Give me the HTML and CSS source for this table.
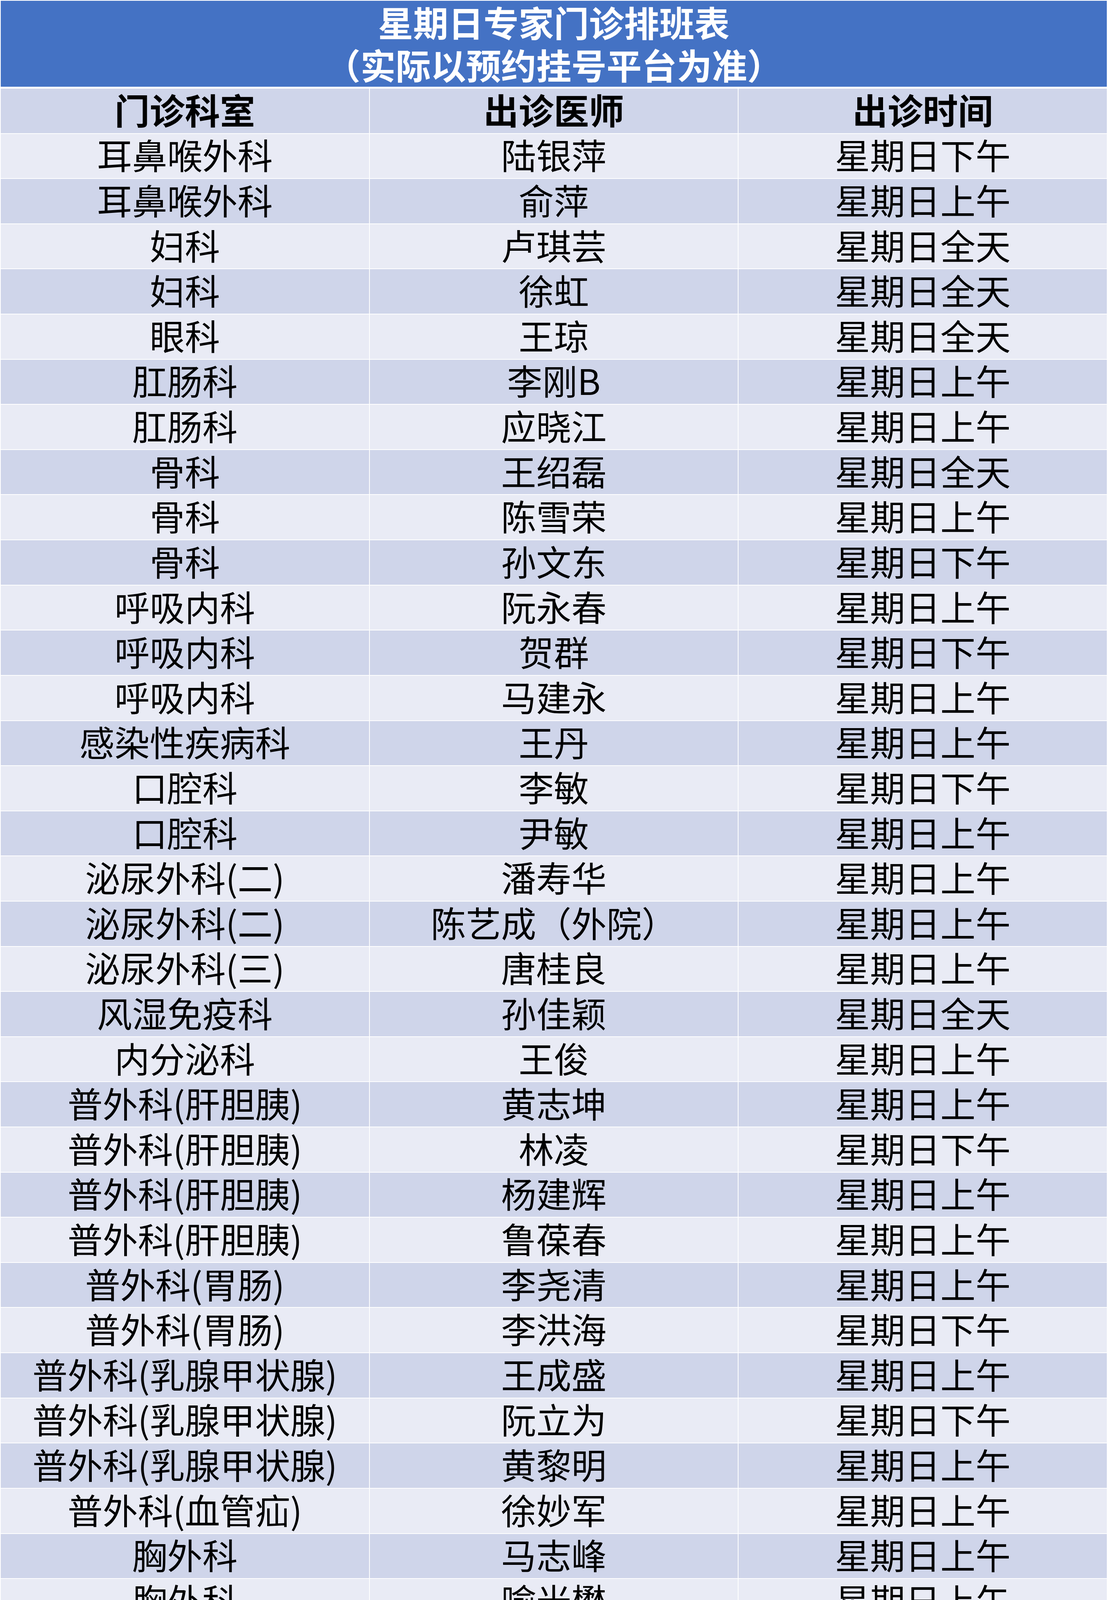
FILE: index.html
```html
<!DOCTYPE html>
<html lang="zh-CN">
<head>
<meta charset="utf-8">
<title>星期日专家门诊排班表</title>
<link rel="stylesheet" href="styles.css">
</head>
<body>
<div class="sheet">
  <div class="title">
    <div class="title-line">星期日专家门诊排班表</div>
    <div class="title-line">（实际以预约挂号平台为准）</div>
  </div>
  <div class="table">
    <div class="row head"><div>门诊科室</div><div>出诊医师</div><div>出诊时间</div></div>
    <div class="row light"><div>耳鼻喉外科</div><div>陆银萍</div><div>星期日下午</div></div>
    <div class="row dark"><div>耳鼻喉外科</div><div>俞萍</div><div>星期日上午</div></div>
    <div class="row light"><div>妇科</div><div>卢琪芸</div><div>星期日全天</div></div>
    <div class="row dark"><div>妇科</div><div>徐虹</div><div>星期日全天</div></div>
    <div class="row light"><div>眼科</div><div>王琼</div><div>星期日全天</div></div>
    <div class="row dark"><div>肛肠科</div><div>李刚B</div><div>星期日上午</div></div>
    <div class="row light"><div>肛肠科</div><div>应晓江</div><div>星期日上午</div></div>
    <div class="row dark"><div>骨科</div><div>王绍磊</div><div>星期日全天</div></div>
    <div class="row light"><div>骨科</div><div>陈雪荣</div><div>星期日上午</div></div>
    <div class="row dark"><div>骨科</div><div>孙文东</div><div>星期日下午</div></div>
    <div class="row light"><div>呼吸内科</div><div>阮永春</div><div>星期日上午</div></div>
    <div class="row dark"><div>呼吸内科</div><div>贺群</div><div>星期日下午</div></div>
    <div class="row light"><div>呼吸内科</div><div>马建永</div><div>星期日上午</div></div>
    <div class="row dark"><div>感染性疾病科</div><div>王丹</div><div>星期日上午</div></div>
    <div class="row light"><div>口腔科</div><div>李敏</div><div>星期日下午</div></div>
    <div class="row dark"><div>口腔科</div><div>尹敏</div><div>星期日上午</div></div>
    <div class="row light"><div>泌尿外科(二)</div><div>潘寿华</div><div>星期日上午</div></div>
    <div class="row dark"><div>泌尿外科(二)</div><div>陈艺成（外院）</div><div>星期日上午</div></div>
    <div class="row light"><div>泌尿外科(三)</div><div>唐桂良</div><div>星期日上午</div></div>
    <div class="row dark"><div>风湿免疫科</div><div>孙佳颖</div><div>星期日全天</div></div>
    <div class="row light"><div>内分泌科</div><div>王俊</div><div>星期日上午</div></div>
    <div class="row dark"><div>普外科(肝胆胰)</div><div>黄志坤</div><div>星期日上午</div></div>
    <div class="row light"><div>普外科(肝胆胰)</div><div>林凌</div><div>星期日下午</div></div>
    <div class="row dark"><div>普外科(肝胆胰)</div><div>杨建辉</div><div>星期日上午</div></div>
    <div class="row light"><div>普外科(肝胆胰)</div><div>鲁葆春</div><div>星期日上午</div></div>
    <div class="row dark"><div>普外科(胃肠)</div><div>李尧清</div><div>星期日上午</div></div>
    <div class="row light"><div>普外科(胃肠)</div><div>李洪海</div><div>星期日下午</div></div>
    <div class="row dark"><div>普外科(乳腺甲状腺)</div><div>王成盛</div><div>星期日上午</div></div>
    <div class="row light"><div>普外科(乳腺甲状腺)</div><div>阮立为</div><div>星期日下午</div></div>
    <div class="row dark"><div>普外科(乳腺甲状腺)</div><div>黄黎明</div><div>星期日上午</div></div>
    <div class="row light"><div>普外科(血管疝)</div><div>徐妙军</div><div>星期日上午</div></div>
    <div class="row dark"><div>胸外科</div><div>马志峰</div><div>星期日上午</div></div>
    <div class="row light"><div>胸外科</div><div>喻光懋</div><div>星期日上午</div></div>
    <div class="row dark"><div>神经内科</div><div>王赵伟</div><div>星期日上午</div></div>
    <div class="row light"><div>神经内科</div><div>朱仁洋</div><div>星期日下午</div></div>
    <div class="row dark"><div>神经内科</div><div>钟芳芳</div><div>星期日下午</div></div>
    <div class="row light"><div>神经外科</div><div>包庆泉</div><div>星期日上午</div></div>
    <div class="row dark"><div>神经外科</div><div>王晓明</div><div>星期日下午</div></div>
    <div class="row light"><div>肾内科</div><div>龚淑文</div><div>星期日上午</div></div>
    <div class="row dark"><div>肾内科</div><div>谢海英</div><div>星期日上午</div></div>
    <div class="row light"><div>疼痛科</div><div>陈栋樑</div><div>星期日上午</div></div>
    <div class="row dark"><div>肿瘤内科</div><div>赵建国</div><div>星期日上午</div></div>
    <div class="row light"><div>放疗科</div><div>徐俊</div><div>星期日上午</div></div>
    <div class="row dark"><div>消化内科</div><div>潘颖颖</div><div>星期日上午</div></div>
    <div class="row light"><div>小儿内科</div><div>姚欢迎</div><div>星期日上午</div></div>
    <div class="row dark"><div>小儿内科</div><div>邵晓丽</div><div>星期日上午</div></div>
    <div class="row light"><div>小儿内科</div><div>胡淑英</div><div>星期日下午</div></div>
    <div class="row dark"><div>心血管内科</div><div>孙勇</div><div>星期日上午</div></div>
    <div class="row light"><div>心血管内科</div><div>许富康</div><div>星期日上午</div></div>
    <div class="row dark"><div>心血管内科</div><div>彭放</div><div>星期日上午</div></div>
    <div class="row light"><div>血液内科</div><div>洪攀</div><div>星期日下午</div></div>
    <div class="row dark"><div>血液内科</div><div>封蔚莹</div><div>星期日上午</div></div>
    <div class="row light"><div>中医科</div><div>徐晓晏</div><div>星期日全天</div></div>
    <div class="row dark"><div>针灸科</div><div>陈荣</div><div>星期日上午</div></div>
    <div class="row light"><div>超声科（心血管）</div><div>诸磊</div><div>星期日上午</div></div>
    <div class="row dark"><div>超声科（乳腺甲状腺）</div><div>李星云</div><div>星期日上午</div></div>
    <div class="row light"><div>超声科（腹部）</div><div>孙建明</div><div>星期日上午</div></div>
    <div class="row dark"><div>放射科</div><div>章俞</div><div>星期日上午</div></div>
    <div class="row light"><div>放射科</div><div>倪瑞军</div><div>星期日上午</div></div>
    <div class="row dark"><div>心理健康门诊</div><div>叶兰英</div><div>星期日下午</div></div>
  </div>
</div>
</body>
</html>
```

FILE: styles.css
```css
html, body {
  margin: 0;
  padding: 0;
  background: #ffffff;
}

body {
  font-family: "Noto Sans CJK SC", "Noto Sans", sans-serif;
  color: #000000;
}

.sheet {
  width: 2832px;
  padding: 2px 3px 0 2px;
  display: flex;
  flex-direction: column;
  gap: 5px;
}

.title {
  height: 220px;
  box-sizing: border-box;
  padding-bottom: 4px;
  background: #4472c4;
  color: #ffffff;
  font-size: 90px;
  font-weight: 700;
  line-height: 109px;
  display: flex;
  flex-direction: column;
  justify-content: center;
  align-items: center;
  white-space: nowrap;
}

.table {
  display: flex;
  flex-direction: column;
  gap: 2px;
}

.row {
  display: grid;
  grid-template-columns: repeat(3, 1fr);
  column-gap: 2px;
  height: 113.62px;
  font-size: 90px;
  line-height: 1;
}

.row > div {
  display: flex;
  align-items: center;
  justify-content: center;
  white-space: nowrap;
  padding-bottom: 10px;
  box-sizing: border-box;
}

.row.head > div {
  background: #cfd5ea;
  font-weight: 700;
}

.row.dark > div {
  background: #cfd5ea;
}

.row.light > div {
  background: #e9ebf5;
}
```
